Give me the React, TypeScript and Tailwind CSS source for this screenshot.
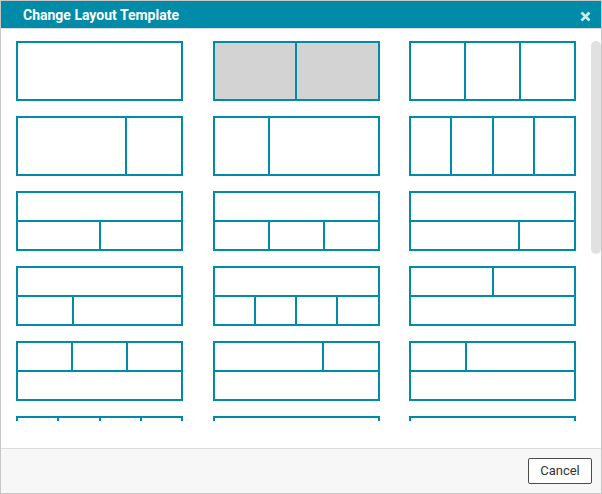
import React from 'react'

// each template: rows of cell weights (top to bottom)
type Template = number[][]

const templates: Template[] = [
  [[1]],
  [[1, 1]],
  [[1, 1, 1]],
  [[2, 1]],
  [[1, 2]],
  [[1, 1, 1, 1]],
  [[1], [1, 1]],
  [[1], [1, 1, 1]],
  [[1], [2, 1]],
  [[1], [1, 2]],
  [[1], [1, 1, 1, 1]],
  [[1, 1], [1]],
  [[1, 1, 1], [1]],
  [[2, 1], [1]],
  [[1, 2], [1]],
  [[1, 1, 1, 1], [1]],
  [[1], [1]],
  [[1], [1]],
]

const Tile = ({ rows, selected }: { rows: Template; selected?: boolean }) => (
  <button
    type="button"
    className={[
      'flex h-[60px] w-[167px] flex-col divide-y-2 divide-[#008ca8] border-2 border-[#008ca8] p-0',
      selected ? 'bg-[#d3d3d3]' : 'bg-white',
    ].join(' ')}
  >
    {rows.map((cells, i) => (
      <div key={i} className="flex flex-1 divide-x-2 divide-[#008ca8]">
        {cells.map((w, j) => (
          <div key={j} className="basis-0" style={{ flexGrow: w }} />
        ))}
      </div>
    ))}
  </button>
)

const CloseIcon = () => (
  <svg width="11" height="11" viewBox="0 0 11 11" aria-hidden="true">
    <path d="M1.5 1.5 9.5 9.5M9.5 1.5 1.5 9.5" stroke="currentColor" strokeWidth="2.6" />
  </svg>
)

export default function App() {
  const [selected, setSelected] = React.useState(1)

  return (
    <div
      className="flex h-[494px] w-[602px] flex-col border border-[#c8c8c8] bg-white"
      style={{ fontFamily: 'Roboto, "Liberation Sans", sans-serif' }}
    >
      {/* Title bar */}
      <header className="flex h-[28px] shrink-0 items-center justify-between border-b border-[#dddddd] bg-[#008ca8] pl-[22px] pr-[10px]">
        <h2 className="pt-[1px] text-[14px] font-bold text-white">Change Layout Template</h2>
        <button type="button" className="mt-[3px] text-[#c9ecf2]">
          <CloseIcon />
        </button>
      </header>

      {/* Template list */}
      <div className="flex-1 pt-[12px] pb-[27px]">
        <div className="relative h-[380px] overflow-hidden">
          <div className="grid grid-cols-[167px_167px_167px] gap-x-[29.5px] gap-y-[15px] pl-[15px]">
            {templates.map((t, i) => (
              <div key={i} onClick={() => setSelected(i)}>
                <Tile rows={t} selected={selected === i} />
              </div>
            ))}
          </div>
          {/* scrollbar thumb */}
          <div className="absolute top-0 right-0 h-[213px] w-[10px] rounded-[5px] bg-[#e1e1e1]" />
        </div>
      </div>

      {/* Footer */}
      <footer className="flex h-[45px] shrink-0 items-center justify-end border-t border-[#dddddd] bg-[#f7f7f7] pr-[9px]">
        <button
          type="button"
          className="h-[26px] w-[64px] rounded-[2px] border border-[#4a4a4a] bg-white text-[13px] text-[#333333]"
        >
          Cancel
        </button>
      </footer>
    </div>
  )
}
